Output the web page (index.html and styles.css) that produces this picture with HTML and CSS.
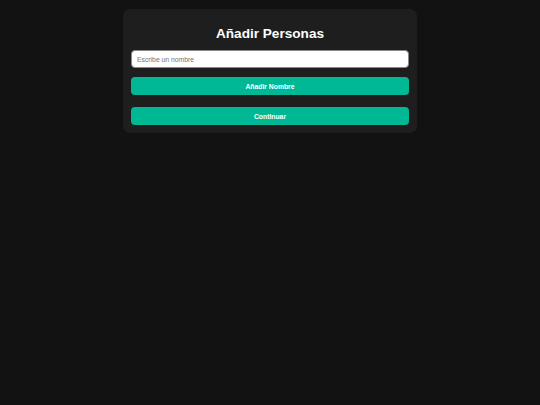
FILE: index.html
```html
<!DOCTYPE html>
<html lang="es">
<head>
<meta charset="utf-8">
<title>Añadir Personas</title>
<link rel="stylesheet" href="styles.css">
</head>
<body>
<div class="card">
  <h2 class="title">Añadir Personas</h2>
  <input class="name-input" type="text" placeholder="Escribe un nombre" spellcheck="false">
  <button class="btn btn-add">Añadir Nombre</button>
  <button class="btn btn-continue">Continuar</button>
</div>
</body>
</html>
```
FILE: styles.css
```css
html, body {
  margin: 0;
  padding: 0;
  background: #121212;
  font-family: "Liberation Sans", Arial, sans-serif;
  color: #fff;
}
body {
  padding-top: 9px;
}
.card {
  width: 294px;
  box-sizing: border-box;
  margin: 0 auto;
  background: #1e1e1e;
  border-radius: 7px;
  padding: 8px 8px 8px;
  display: flex;
  flex-direction: column;
}
.title {
  margin: 8px 0 8px;
  font-size: 13.6px;
  line-height: 17px;
  text-align: center;
  font-weight: bold;
}
.name-input {
  height: 18px;
  box-sizing: border-box;
  border: 1px solid #888;
  border-radius: 4px;
  background: #fff;
  padding: 0 5px;
  font-family: inherit;
  font-size: 6.8px;
  color: #333;
  outline: none;
}
.name-input::placeholder {
  color: #757575;
}
.btn {
  height: 18px;
  border: none;
  border-radius: 4px;
  background: #00b894;
  color: #fff;
  font-family: inherit;
  font-size: 6.8px;
  font-weight: bold;
  padding: 0;
}
.btn-add {
  margin-top: 9px;
}
.btn-continue {
  margin-top: 12px;
}
```
